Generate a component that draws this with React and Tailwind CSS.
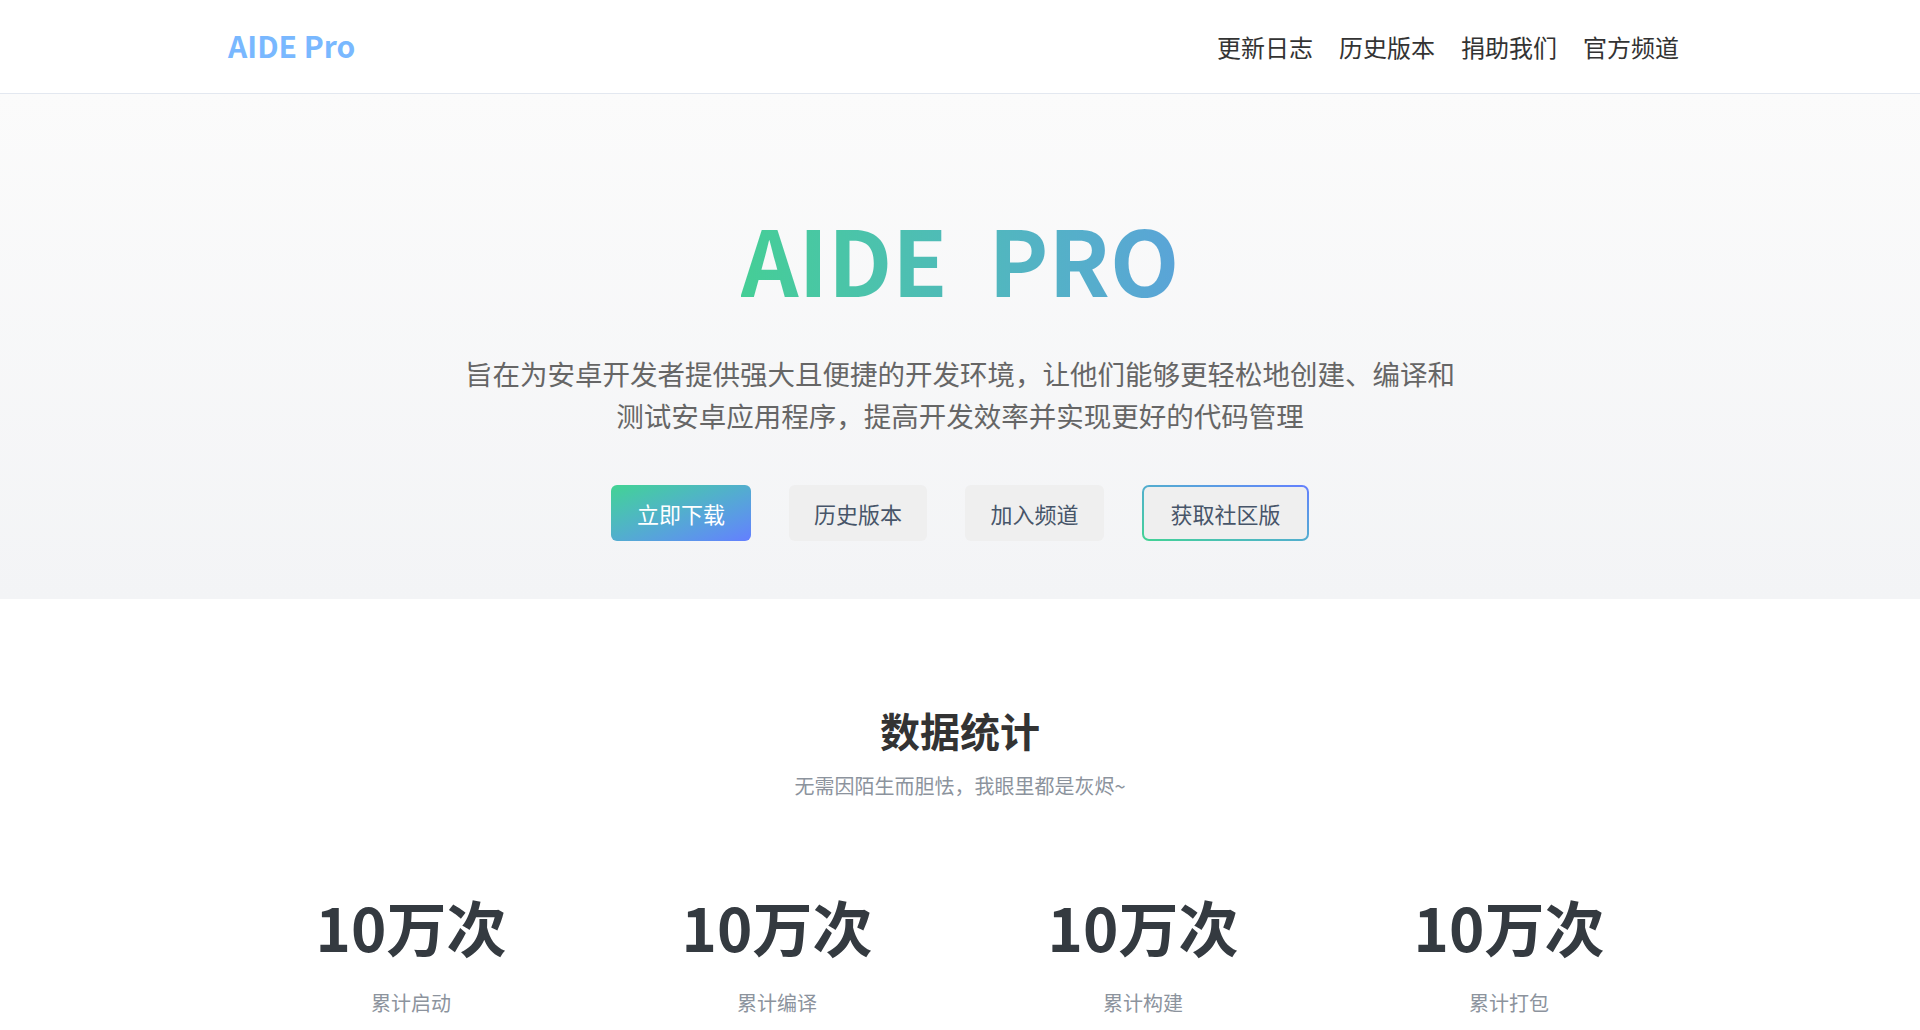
export default function App() {
  const stats = [
    { n: "10万次", l: "累计启动" },
    { n: "10万次", l: "累计编译" },
    { n: "10万次", l: "累计构建" },
    { n: "10万次", l: "累计打包" },
  ];
  return (
    <div
      className="min-h-screen bg-white"
      style={{ fontFamily: '"Noto Sans CJK SC", "Noto Sans", sans-serif' }}
    >
      <header className="h-[94px] border-b border-[#e3e8f0] bg-white">
        <div className="w-[1464px] mx-auto h-full flex items-center justify-between">
          <div className="text-[30px] leading-none font-bold text-[#79b8ff] mb-[4px]">AIDE Pro</div>
          <nav className="flex items-center text-[24px] leading-none text-[#333]">
            <a className="px-[13px]">更新日志</a>
            <a className="px-[13px]">历史版本</a>
            <a className="px-[13px]">捐助我们</a>
            <a className="px-[13px]">官方频道</a>
          </nav>
        </div>
      </header>

      <section className="bg-linear-to-b from-[#fbfbfb] to-[#f3f4f6] pt-[119px] pb-[58px] flex flex-col items-center">
        <h1 className="text-[90px] leading-none font-bold">
          <span className="inline-block bg-linear-to-r from-[#45ce96] to-[#5aa4d8] bg-clip-text text-transparent">
            AIDE&nbsp;&nbsp;PRO
          </span>
        </h1>
        <p className="mt-[49px] max-w-[1000px] text-center text-[27.5px] leading-[42px] text-[#666]">
          旨在为安卓开发者提供强大且便捷的开发环境，让他们能够更轻松地创建、编译和测试安卓应用程序，提高开发效率并实现更好的代码管理
        </p>
        <div className="mt-[49px] flex items-center gap-[38px]">
          <button className="h-[56px] w-[140px] rounded-[6px] bg-linear-to-br from-[#42d392] to-[#647eff] text-white text-[22px] leading-none flex items-center justify-center">
            立即下载
          </button>
          <button className="h-[56px] w-[138px] rounded-[6px] bg-[#efefef] text-[#475569] text-[22px] leading-none flex items-center justify-center">
            历史版本
          </button>
          <button className="h-[56px] w-[139px] rounded-[6px] bg-[#efefef] text-[#475569] text-[22px] leading-none flex items-center justify-center">
            加入频道
          </button>
          <div className="h-[56px] w-[167px] rounded-[7px] p-[2px] bg-linear-to-tr from-[#42d392] to-[#647eff]">
            <button className="h-full w-full rounded-[5px] bg-[#efefef] text-[#475569] text-[22px] leading-none flex items-center justify-center">
              获取社区版
            </button>
          </div>
        </div>
      </section>

      <section className="pt-[101px] pb-[80px] flex flex-col items-center">
        <h2 className="text-[40px] leading-[60px] font-bold text-[#333]">数据统计</h2>
        <p className="mt-[11px] text-[20px] leading-[30px] text-[#8c939d]">无需因陌生而胆怯，我眼里都是灰烬~</p>
        <div className="mt-[95px] w-[1464px] grid grid-cols-4">
          {stats.map((s, i) => (
            <div key={i} className="flex flex-col items-center">
              <div className="text-[60px] leading-[60px] font-bold text-[#343a40]">{s.n}</div>
              <div className="mt-[32px] text-[20px] leading-[30px] text-[#8c939d]">{s.l}</div>
            </div>
          ))}
        </div>
      </section>
    </div>
  );
}
